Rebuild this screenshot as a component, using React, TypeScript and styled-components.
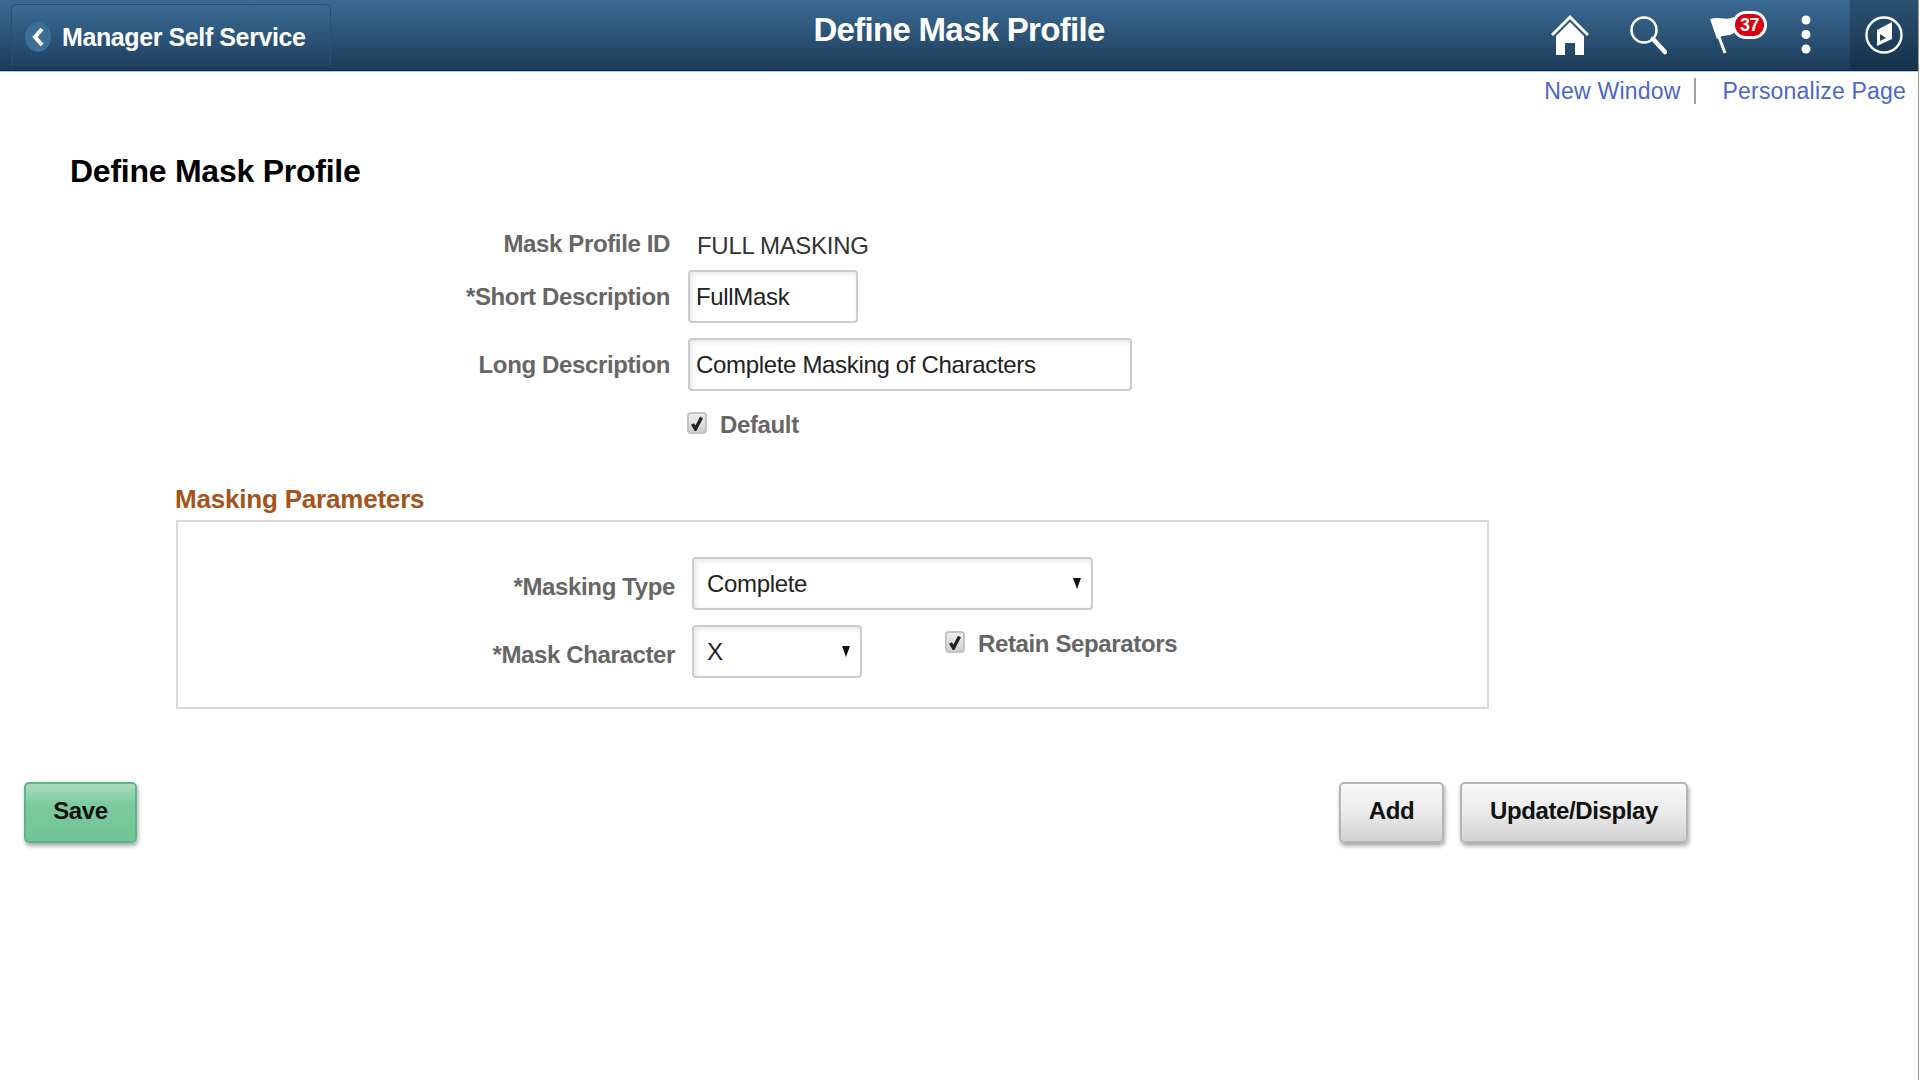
import React from "react";
import styled, { createGlobalStyle } from "styled-components";

const Global = createGlobalStyle`
  html, body { margin: 0; padding: 0; background: #fff; }
  body { font-family: "Liberation Sans", Arial, sans-serif; height: 1080px; overflow: hidden; }
  * { box-sizing: border-box; }
`;

const Page = styled.div`
  width: 1919px;
  height: 1080px;
  background: #fff;
  border-right: 1px solid #9a9a9a;
`;

const Header = styled.header`
  height: 72px;
  display: grid;
  grid-template-columns: 1fr auto 1fr;
  background: linear-gradient(#3a6a94 0%, #2d5679 45%, #1c3a57 100%);
  border-bottom: 1px solid #a9cbe9;
  box-shadow: inset 0 -1px 0 #14293f;
`;

const BackButton = styled.div`
  justify-self: start;
  width: 320px;
  height: 64px;
  margin: 4px 0 0 11px;
  display: flex;
  align-items: center;
  gap: 11px;
  padding: 3px 0 0 13px;
  background: linear-gradient(#3a6b95, #1f4060);
  border: 1px solid #2a4f70;
  border-bottom-color: #1a3550;
  border-radius: 5px;
`;

const BackCircle = styled.span`
  width: 26px;
  height: 30px;
  margin-top: -2px;
  border-radius: 50%;
  background: #3d6f96;
  display: flex;
  align-items: center;
  justify-content: center;
`;

const BackLabel = styled.span`
  color: #fff;
  font-size: 25px;
  font-weight: 700;
  letter-spacing: -0.4px;
  white-space: nowrap;
`;

const HeaderTitle = styled.h1`
  margin: 0;
  padding-top: 9px;
  color: #fff;
  font-size: 33px;
  font-weight: 700;
  letter-spacing: -0.7px;
  line-height: 42px;
  white-space: nowrap;
`;

const Actions = styled.div`
  justify-self: end;
  display: flex;
  align-items: stretch;
  height: 70px;
`;

const ActionIcon = styled.span<{ $w: number; $mr: number }>`
  width: ${(p) => p.$w}px;
  margin-right: ${(p) => p.$mr}px;
  display: flex;
  align-items: center;
  justify-content: center;
  position: relative;
`;

const NavSection = styled.span`
  width: 68px;
  display: flex;
  align-items: center;
  justify-content: center;
  background: linear-gradient(#2b5273, #16314b);
`;

const Badge = styled.span`
  position: absolute;
  top: 11px;
  left: 22px;
  width: 35px;
  height: 28px;
  border-radius: 14px;
  background: #d8000c;
  border: 3px solid #fff;
  color: #fff;
  font-size: 18px;
  font-weight: 700;
  letter-spacing: -0.5px;
  line-height: 22px;
  text-align: center;
`;

const LinkBar = styled.nav`
  height: 36px;
  display: flex;
  justify-content: flex-end;
  align-items: center;
  padding: 2px 12px 0 0;
`;

const PageLink = styled.a`
  color: #4a66cc;
  font-size: 23px;
  text-decoration: none;
  white-space: nowrap;
  letter-spacing: 0.2px;
`;

const LinkSep = styled.span`
  width: 2px;
  height: 26px;
  background: #9a9aa8;
  margin: 0 27px 0 13px;
`;

const PageHeading = styled.h2`
  margin: 43px 0 0 70px;
  height: 42px;
  color: #000;
  font-size: 32px;
  letter-spacing: -0.25px;
  line-height: 41px;
  font-weight: 700;
`;

const Form = styled.section`
  margin-top: 33px;
`;

const FormRow = styled.div<{ $h: number; $mt?: number }>`
  display: grid;
  grid-template-columns: 670px auto;
  column-gap: 18px;
  align-items: center;
  height: ${(p) => p.$h}px;
  margin-top: ${(p) => p.$mt ?? 0}px;
`;

const Label = styled.label`
  text-align: right;
  color: #666;
  font-size: 24px;
  font-weight: 700;
  letter-spacing: -0.37px;
  white-space: nowrap;
`;

const Value = styled.span`
  color: #333;
  font-size: 24px;
  letter-spacing: -0.3px;
  padding: 3px 0 0 9px;
  white-space: nowrap;
`;

const TextBox = styled.div<{ $w: number; $h?: number }>`
  width: ${(p) => p.$w}px;
  height: ${(p) => p.$h ?? 53}px;
  padding-left: 6px;
  display: flex;
  align-items: center;
  border: 2px solid #ccc;
  border-radius: 4px;
  background: #fff;
  box-shadow: inset 2px 2px 5px rgba(0, 0, 0, 0.1);
  color: #222;
  font-size: 24px;
  letter-spacing: -0.33px;
  white-space: nowrap;
`;

const Check = styled.span`
  width: 20px;
  height: 22px;
  margin: 0 0 4px -1px;
  flex: none;
  display: flex;
  align-items: center;
  justify-content: center;
  border: 2px solid #c4c4c4;
  border-radius: 4px;
  background: linear-gradient(#eeeeee, #cfcfcf);
`;

const CheckField = styled.div`
  display: flex;
  align-items: center;
  gap: 13px;
`;

const CheckLabel = styled.span`
  color: #666;
  font-size: 24px;
  font-weight: 700;
  letter-spacing: -0.37px;
  white-space: nowrap;
`;

const SectionTitle = styled.h3`
  margin: 40px 0 0 175px;
  height: 30px;
  color: #a4541a;
  font-size: 26px;
  letter-spacing: -0.2px;
  line-height: 32px;
  font-weight: 700;
`;

const ParamBox = styled.div`
  margin: 7px 0 0 176px;
  width: 1313px;
  height: 189px;
  border: 2px solid #d9d9d9;
  padding-top: 35px;
`;

const ParamRow = styled.div<{ $mt?: number }>`
  display: grid;
  grid-template-columns: 497px auto auto;
  column-gap: 17px;
  justify-content: start;
  align-items: center;
  height: 53px;
  margin-top: ${(p) => p.$mt ?? 0}px;
`;

const ParamLabel = styled(Label)`
  padding-top: 7px;
`;

const Select = styled(TextBox)`
  justify-content: space-between;
  padding: 0 10px 0 13px;
`;

const Caret = styled.span`
  width: 0;
  height: 0;
  border-left: 4px solid transparent;
  border-right: 4px solid transparent;
  border-top: 11px solid #111;
`;

const RetainField = styled(CheckField)`
  margin: 0 0 15px 67px;
`;

const ButtonRow = styled.div`
  margin-top: 73px;
  padding: 0 230px 0 24px;
  display: flex;
  justify-content: space-between;
`;

const ButtonGroup = styled.div`
  display: flex;
  gap: 16px;
`;

const Btn = styled.button<{ $w: number; $primary?: boolean }>`
  width: ${(p) => p.$w}px;
  height: 61px;
  padding: 0 0 3px;
  border-radius: 5px;
  border: 2px solid ${(p) => (p.$primary ? "#5cb585" : "#b5b5b5")};
  background: ${(p) =>
    p.$primary
      ? "linear-gradient(#a9dcc0 0%, #7ccb9f 35%, #71c496 100%)"
      : "linear-gradient(#f7f7f7 0%, #ececec 45%, #d2d2d2 100%)"};
  box-shadow: 1px 3px 4px rgba(0, 0, 0, 0.35);
  color: #111;
  font-family: inherit;
  font-size: 24px;
  font-weight: 700;
  letter-spacing: -0.4px;
`;

const Checkmark = () => (
  <svg width="12" height="15" viewBox="0 0 12 15">
    <path d="M1.5 8 L4.5 13 L10.5 1.5" fill="none" stroke="#222" strokeWidth="3.4" />
  </svg>
);

export default function App() {
  return (
    <Page>
      <Global />
      <Header>
        <BackButton>
          <BackCircle>
            <svg width="14" height="20" viewBox="0 0 14 20">
              <path d="M11 2 L4 10 L11 18" fill="none" stroke="#fff" strokeWidth="4" />
            </svg>
          </BackCircle>
          <BackLabel>Manager Self Service</BackLabel>
        </BackButton>
        <HeaderTitle>Define Mask Profile</HeaderTitle>
        <Actions>
          <ActionIcon $w={38} $mr={40}>
            <svg width="38" height="42" viewBox="0 0 38 42">
              <path d="M1 21 L19 3 L37 21" fill="none" stroke="#fff" strokeWidth="3" />
              <path d="M5 22 L19 8 L33 22 V41 H24 V29 H14 V41 H5 Z" fill="#fff" />
            </svg>
          </ActionIcon>
          <ActionIcon $w={38} $mr={43}>
            <svg width="38" height="42" viewBox="0 0 38 42">
              <circle cx="15" cy="16" r="12.5" fill="none" stroke="#fff" strokeWidth="2.5" />
              <path d="M24 25 L36 38" stroke="#fff" strokeWidth="4.5" strokeLinecap="round" />
            </svg>
          </ActionIcon>
          <ActionIcon $w={57} $mr={34}>
            <svg width="57" height="69" viewBox="0 0 57 69">
              <path d="M0 18 C8 15 16 20 24 16 V32 C18 36 12 33 7 38 Z" fill="#fff" />
              <path d="M3 20 L15 52" stroke="#fff" strokeWidth="3" />
            </svg>
            <Badge>37</Badge>
          </ActionIcon>
          <ActionIcon $w={10} $mr={39}>
            <svg width="10" height="42" viewBox="0 0 10 42">
              <circle cx="5" cy="6" r="4.5" fill="#fff" />
              <circle cx="5" cy="20.5" r="4.5" fill="#fff" />
              <circle cx="5" cy="35" r="4.5" fill="#fff" />
            </svg>
          </ActionIcon>
          <NavSection>
            <svg width="40" height="40" viewBox="0 0 40 40">
              <circle cx="20" cy="20" r="17.5" fill="none" stroke="#fff" strokeWidth="2.4" />
              <path d="M13 15 L28 7 L28 24 L13 31 Z" fill="#fff" />
              <path d="M16 19 L22 23 L16 26 Z" fill="#21425f" />
            </svg>
          </NavSection>
        </Actions>
      </Header>

      <LinkBar>
        <PageLink>New Window</PageLink>
        <LinkSep />
        <PageLink>Personalize Page</PageLink>
      </LinkBar>

      <PageHeading>Define Mask Profile</PageHeading>

      <Form>
        <FormRow $h={36}>
          <Label>Mask Profile ID</Label>
          <Value>FULL MASKING</Value>
        </FormRow>
        <FormRow $h={53} $mt={8}>
          <Label>*Short Description</Label>
          <TextBox $w={170}>FullMask</TextBox>
        </FormRow>
        <FormRow $h={53} $mt={15}>
          <Label>Long Description</Label>
          <TextBox $w={444}>Complete Masking of Characters</TextBox>
        </FormRow>
        <FormRow $h={36} $mt={16}>
          <span />
          <CheckField>
            <Check><Checkmark /></Check>
            <CheckLabel>Default</CheckLabel>
          </CheckField>
        </FormRow>
      </Form>

      <SectionTitle>Masking Parameters</SectionTitle>
      <ParamBox>
        <ParamRow>
          <ParamLabel>*Masking Type</ParamLabel>
          <Select $w={401}>
            Complete
            <Caret />
          </Select>
        </ParamRow>
        <ParamRow $mt={15}>
          <ParamLabel>*Mask Character</ParamLabel>
          <Select $w={170}>
            X
            <Caret />
          </Select>
          <RetainField>
            <Check><Checkmark /></Check>
            <CheckLabel>Retain Separators</CheckLabel>
          </RetainField>
        </ParamRow>
      </ParamBox>

      <ButtonRow>
        <Btn $w={113} $primary>Save</Btn>
        <ButtonGroup>
          <Btn $w={105}>Add</Btn>
          <Btn $w={228}>Update/Display</Btn>
        </ButtonGroup>
      </ButtonRow>
    </Page>
  );
}
